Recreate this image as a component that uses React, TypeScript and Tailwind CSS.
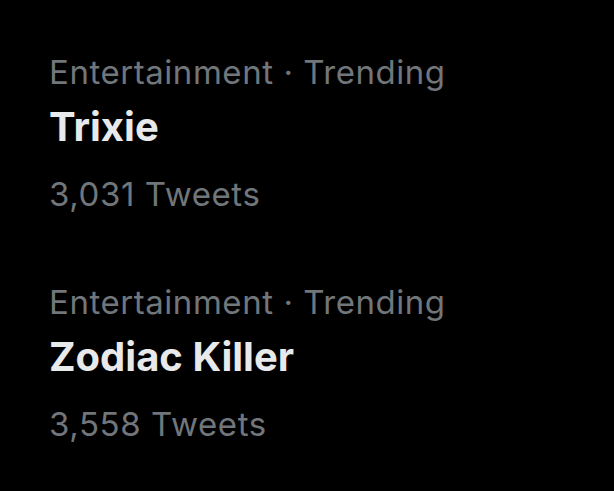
const trends = [
  { category: 'Entertainment · Trending', name: 'Trixie', count: '3,031 Tweets' },
  { category: 'Entertainment · Trending', name: 'Zodiac Killer', count: '3,558 Tweets' },
];

export default function App() {
  return (
    <div
      className="w-[614px] h-[491px] bg-black pl-[49px] pt-[44px] flex flex-col gap-[39px]"
      style={{ fontFamily: 'Inter, Roboto, "Liberation Sans", sans-serif' }}
    >
      {trends.map((t) => (
        <div key={t.name} className="flex flex-col">
          <div className="text-[33px] leading-[56px] tracking-[0.55px] text-[#71767b]">{t.category}</div>
          <div className="text-[40px] leading-[53px] font-bold text-[#e7e9ea]">{t.name}</div>
          <div className="text-[33px] leading-[82px] tracking-[0.6px] text-[#71767b]">{t.count}</div>
        </div>
      ))}
    </div>
  );
}
